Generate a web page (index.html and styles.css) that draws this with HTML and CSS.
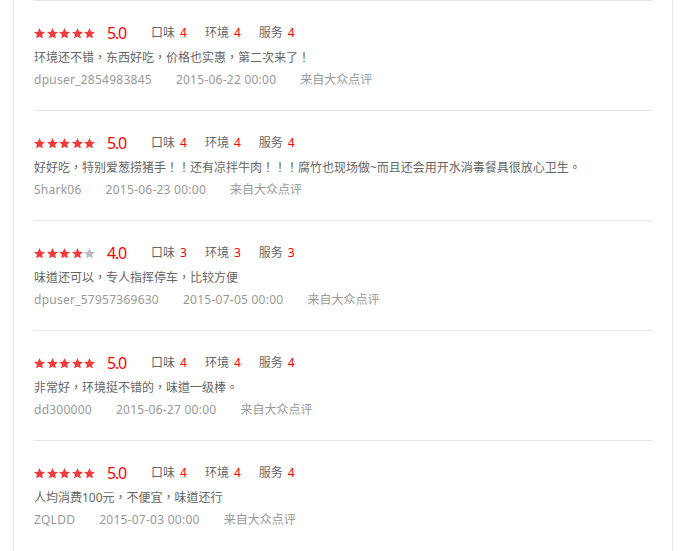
FILE: index.html
```html
<!DOCTYPE html>
<html lang="zh-CN">
<head>
<meta charset="utf-8">
<title>评论</title>
<link rel="stylesheet" href="styles.css">
</head>
<body>
<svg class="defs" width="0" height="0" aria-hidden="true">
  <symbol id="star" viewBox="2 2 20 19">
    <polygon points="12,2 14.9,8.6 22,9.3 16.6,14 18.2,21 12,17.3 5.8,21 7.4,14 2,9.3 9.1,8.6"/>
  </symbol>
</svg>
<div class="panel">
  <ul class="reviews">
    <li class="review">
      <div class="rating">
        <span class="stars">
          <svg class="star on"><use href="#star"/></svg><svg class="star on"><use href="#star"/></svg><svg class="star on"><use href="#star"/></svg><svg class="star on"><use href="#star"/></svg><svg class="star on"><use href="#star"/></svg>
        </span>
        <span class="score">5.0</span>
        <span class="sub">口味<em>4</em></span>
        <span class="sub">环境<em>4</em></span>
        <span class="sub">服务<em>4</em></span>
      </div>
      <p class="content" lang="zh-TW">环境还不错，东西好吃，价格也实惠，第二次来了！</p>
      <div class="meta"><span class="latin">dpuser_2854983845</span><span class="latin">2015-06-22 00:00</span><span>来自大众点评</span></div>
    </li>
    <li class="review">
      <div class="rating">
        <span class="stars">
          <svg class="star on"><use href="#star"/></svg><svg class="star on"><use href="#star"/></svg><svg class="star on"><use href="#star"/></svg><svg class="star on"><use href="#star"/></svg><svg class="star on"><use href="#star"/></svg>
        </span>
        <span class="score">5.0</span>
        <span class="sub">口味<em>4</em></span>
        <span class="sub">环境<em>4</em></span>
        <span class="sub">服务<em>4</em></span>
      </div>
      <p class="content" lang="zh-TW">好好吃，特别爱葱捞猪手！！还有凉拌牛肉！！！腐竹也现场做~而且还会用开水消毒餐具很放心卫生。</p>
      <div class="meta"><span class="latin">Shark06</span><span class="latin">2015-06-23 00:00</span><span>来自大众点评</span></div>
    </li>
    <li class="review">
      <div class="rating">
        <span class="stars">
          <svg class="star on"><use href="#star"/></svg><svg class="star on"><use href="#star"/></svg><svg class="star on"><use href="#star"/></svg><svg class="star on"><use href="#star"/></svg><svg class="star off"><use href="#star"/></svg>
        </span>
        <span class="score">4.0</span>
        <span class="sub">口味<em>3</em></span>
        <span class="sub">环境<em>3</em></span>
        <span class="sub">服务<em>3</em></span>
      </div>
      <p class="content" lang="zh-TW">味道还可以，专人指挥停车，比较方便</p>
      <div class="meta"><span class="latin">dpuser_57957369630</span><span class="latin">2015-07-05 00:00</span><span>来自大众点评</span></div>
    </li>
    <li class="review">
      <div class="rating">
        <span class="stars">
          <svg class="star on"><use href="#star"/></svg><svg class="star on"><use href="#star"/></svg><svg class="star on"><use href="#star"/></svg><svg class="star on"><use href="#star"/></svg><svg class="star on"><use href="#star"/></svg>
        </span>
        <span class="score">5.0</span>
        <span class="sub">口味<em>4</em></span>
        <span class="sub">环境<em>4</em></span>
        <span class="sub">服务<em>4</em></span>
      </div>
      <p class="content" lang="zh-TW">非常好，环境挺不错的，味道一级棒。</p>
      <div class="meta"><span class="latin">dd300000</span><span class="latin">2015-06-27 00:00</span><span>来自大众点评</span></div>
    </li>
    <li class="review">
      <div class="rating">
        <span class="stars">
          <svg class="star on"><use href="#star"/></svg><svg class="star on"><use href="#star"/></svg><svg class="star on"><use href="#star"/></svg><svg class="star on"><use href="#star"/></svg><svg class="star on"><use href="#star"/></svg>
        </span>
        <span class="score">5.0</span>
        <span class="sub">口味<em>4</em></span>
        <span class="sub">环境<em>4</em></span>
        <span class="sub">服务<em>4</em></span>
      </div>
      <p class="content" lang="zh-TW">人均消费100元，不便宜，味道还行</p>
      <div class="meta"><span class="latin">ZQLDD</span><span class="latin">2015-07-03 00:00</span><span>来自大众点评</span></div>
    </li>
  </ul>
</div>
</body>
</html>
```

FILE: styles.css
```css
html, body {
  margin: 0;
  padding: 0;
  background: #fff;
}
body {
  font-family: "Noto Sans", "Noto Sans CJK SC", sans-serif;
  font-size: 12px;
  color: #666;
}
.defs {
  position: absolute;
  width: 0;
  height: 0;
  overflow: hidden;
}
.panel {
  margin-left: 13px;
  width: 660px;
  min-height: 551px;
  border-left: 1px solid #e8e8e8;
  border-right: 1px solid #e8e8e8;
  padding: 0 20px;
  box-sizing: border-box;
}
.reviews {
  list-style: none;
  margin: 0;
  padding: 0;
}
.review {
  border-top: 1px solid #e5e5e5;
  padding: 20px 0 20px;
}
.rating {
  display: flex;
  align-items: center;
  height: 24px;
}
.stars {
  display: flex;
  gap: 1.5px;
}
.star {
  width: 11px;
  height: 10.5px;
  display: block;
}
.star.on { fill: #f23a3a; }
.star.off { fill: #bbb; }
.score {
  margin-left: 12px;
  font-size: 16px;
  letter-spacing: -1.2px;
  color: #f00;
  width: 44px;
  line-height: 24px;
}
.sub {
  margin-right: 18px;
  line-height: 24px;
  color: #666;
}
.sub em {
  font-style: normal;
  color: #f00;
  margin-left: 5px;
}
.content {
  margin: 0;
  padding-top: 1px;
  line-height: 24px;
  color: #666;
  font-family: "Noto Sans", "Noto Sans CJK TC", sans-serif;
}
.meta {
  line-height: 20px;
  color: #999;
  display: flex;
  gap: 24px;
}
.meta .latin {
  letter-spacing: 0.25px;
}
```
